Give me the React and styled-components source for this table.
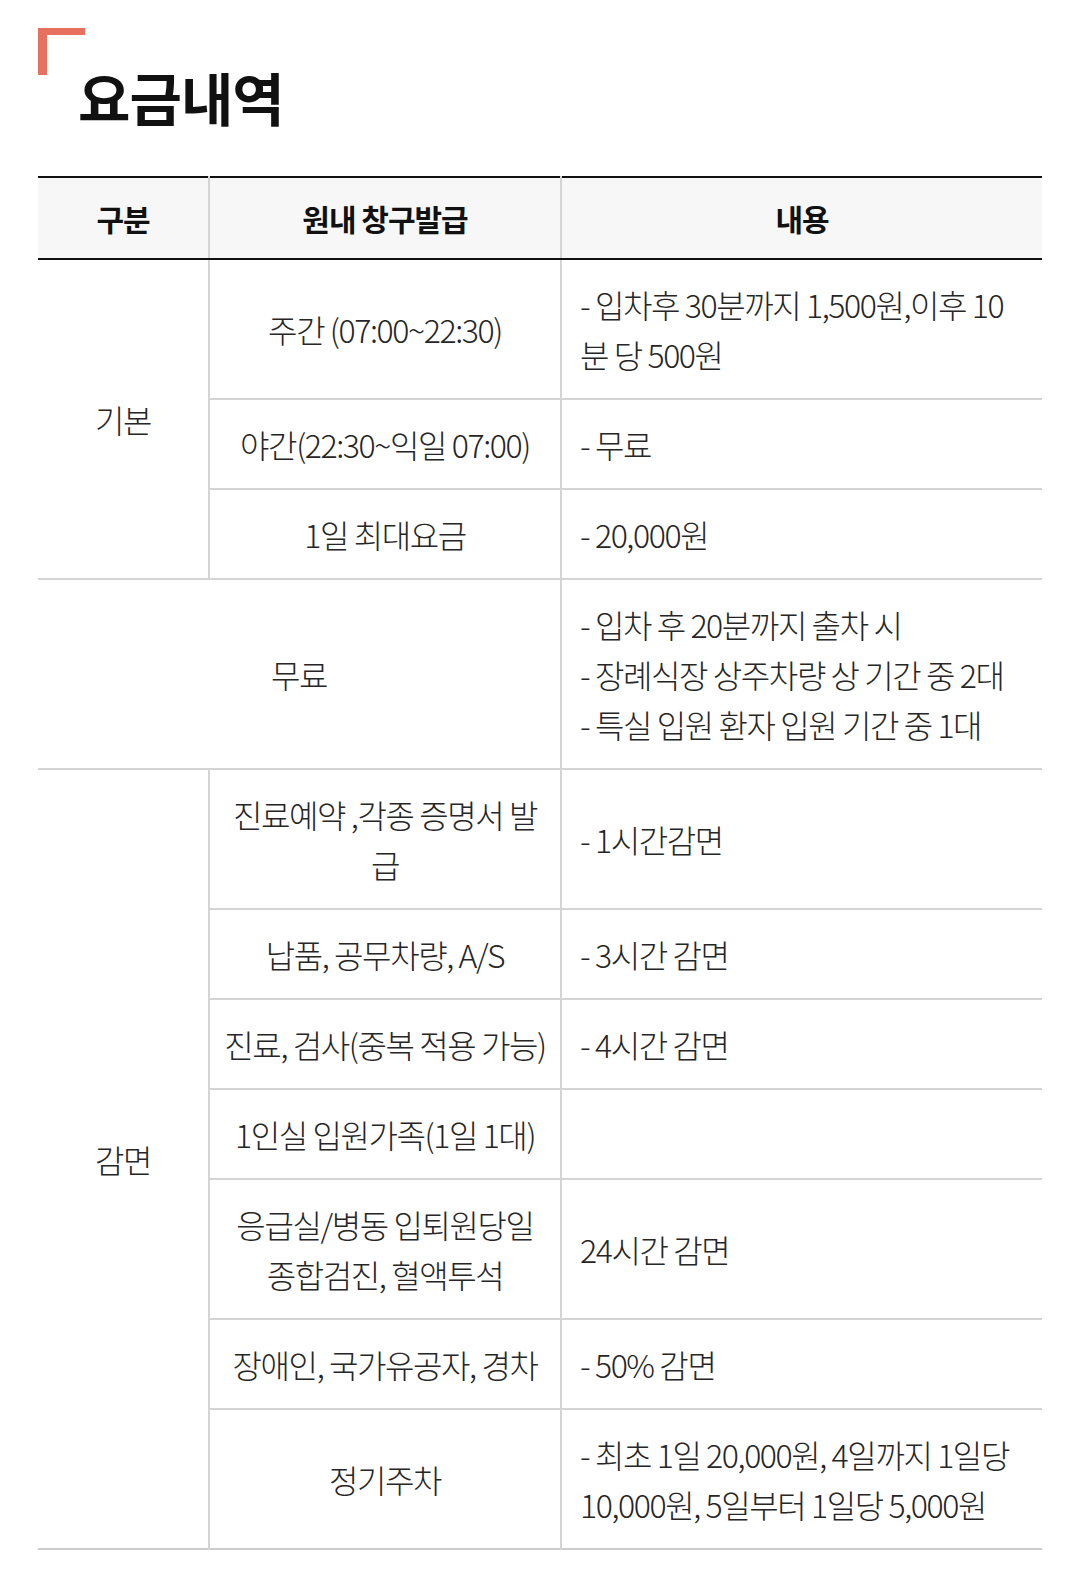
import styled, { createGlobalStyle } from 'styled-components';

const GlobalStyle = createGlobalStyle`
  html, body {
    margin: 0;
    padding: 0;
    background: #fff;
  }
  body {
    font-family: "Noto Sans CJK KR", "Noto Sans", sans-serif;
    color: #222;
  }
`;

const Page = styled.div`
  padding: 28px 0 40px 38px;
`;

const Title = styled.h2`
  position: relative;
  margin: 0;
  padding: 34px 0 0 40px;
  font-size: 57px;
  font-weight: 700;
  line-height: 1.2;
  letter-spacing: -1px;
  color: #111;

  &::before {
    content: "";
    position: absolute;
    left: 0;
    top: 0;
    width: 38px;
    height: 40px;
    border-top: 7px solid #e8705f;
    border-left: 9px solid #e8705f;
  }
`;

const Table = styled.table`
  width: 1004px;
  margin-top: 46px;
  border-collapse: collapse;
  table-layout: fixed;
  border-top: 2px solid #111;
  border-bottom: 2px solid #ccc;
`;

const HeadCell = styled.th`
  height: 80px;
  padding: 0;
  background: #f7f7f7;
  border-bottom: 2px solid #111;
  border-left: 2px solid #d4d4d4;
  font-size: 30px;
  font-weight: 700;
  letter-spacing: -1px;
  color: #111;
  &:first-child {
    border-left: none;
  }
`;

const Cell = styled.td`
  padding: ${({ $align }) => ($align === 'left' ? '19px 20px 19px 18px' : '19px 10px')};
  border-top: 2px solid #d4d4d4;
  border-left: 2px solid #d4d4d4;
  font-size: 32px;
  font-weight: 300;
  line-height: 50px;
  letter-spacing: -1.4px;
  color: #262626;
  text-align: ${({ $align }) => $align || 'center'};
  vertical-align: middle;
  &:first-child {
    border-left: ${({ $edge }) => ($edge ? 'none' : '2px solid #d4d4d4')};
  }
`;

const Line = styled.div``;

const rows = [
  { group: '기본', span: 3, item: '주간 (07:00~22:30)', desc: ['- 입차후 30분까지 1,500원,이후 10분 당 500원'] },
  { item: '야간(22:30~익일 07:00)', desc: ['- 무료'] },
  { item: '1일 최대요금', desc: ['- 20,000원'] },
  {
    free: '무료',
    desc: ['- 입차 후 20분까지 출차 시', '- 장례식장 상주차량 상 기간 중 2대', '- 특실 입원 환자 입원 기간 중 1대'],
  },
  { group: '감면', span: 7, item: '진료예약 ,각종 증명서 발급', desc: ['- 1시간감면'] },
  { item: '납품, 공무차량, A/S', desc: ['- 3시간 감면'] },
  { item: '진료, 검사(중복 적용 가능)', desc: ['- 4시간 감면'] },
  { item: '1인실 입원가족(1일 1대)', desc: [] },
  { item: ['응급실/병동 입퇴원당일', '종합검진, 혈액투석'], desc: ['24시간 감면'] },
  { item: '장애인, 국가유공자, 경차', desc: ['- 50% 감면'] },
  { item: '정기주차', desc: ['- 최초 1일 20,000원, 4일까지 1일당 10,000원, 5일부터 1일당 5,000원'] },
];

export default function App() {
  return (
    <Page>
      <GlobalStyle />
      <Title>요금내역</Title>
      <Table>
        <colgroup>
          <col style={{ width: 171 }} />
          <col style={{ width: 352 }} />
          <col />
        </colgroup>
        <thead>
          <tr>
            <HeadCell>구분</HeadCell>
            <HeadCell>원내 창구발급</HeadCell>
            <HeadCell>내용</HeadCell>
          </tr>
        </thead>
        <tbody>
          {rows.map((r, i) => (
            <tr key={i}>
              {r.group && (
                <Cell $edge rowSpan={r.span}>
                  {r.group}
                </Cell>
              )}
              {r.free ? (
                <Cell $edge colSpan={2}>
                  {r.free}
                </Cell>
              ) : (
                <Cell $edge={false}>
                  {Array.isArray(r.item) ? r.item.map((t) => <Line key={t}>{t}</Line>) : r.item}
                </Cell>
              )}
              <Cell $align="left">
                {r.desc.map((t) => (
                  <Line key={t}>{t}</Line>
                ))}
              </Cell>
            </tr>
          ))}
        </tbody>
      </Table>
    </Page>
  );
}
